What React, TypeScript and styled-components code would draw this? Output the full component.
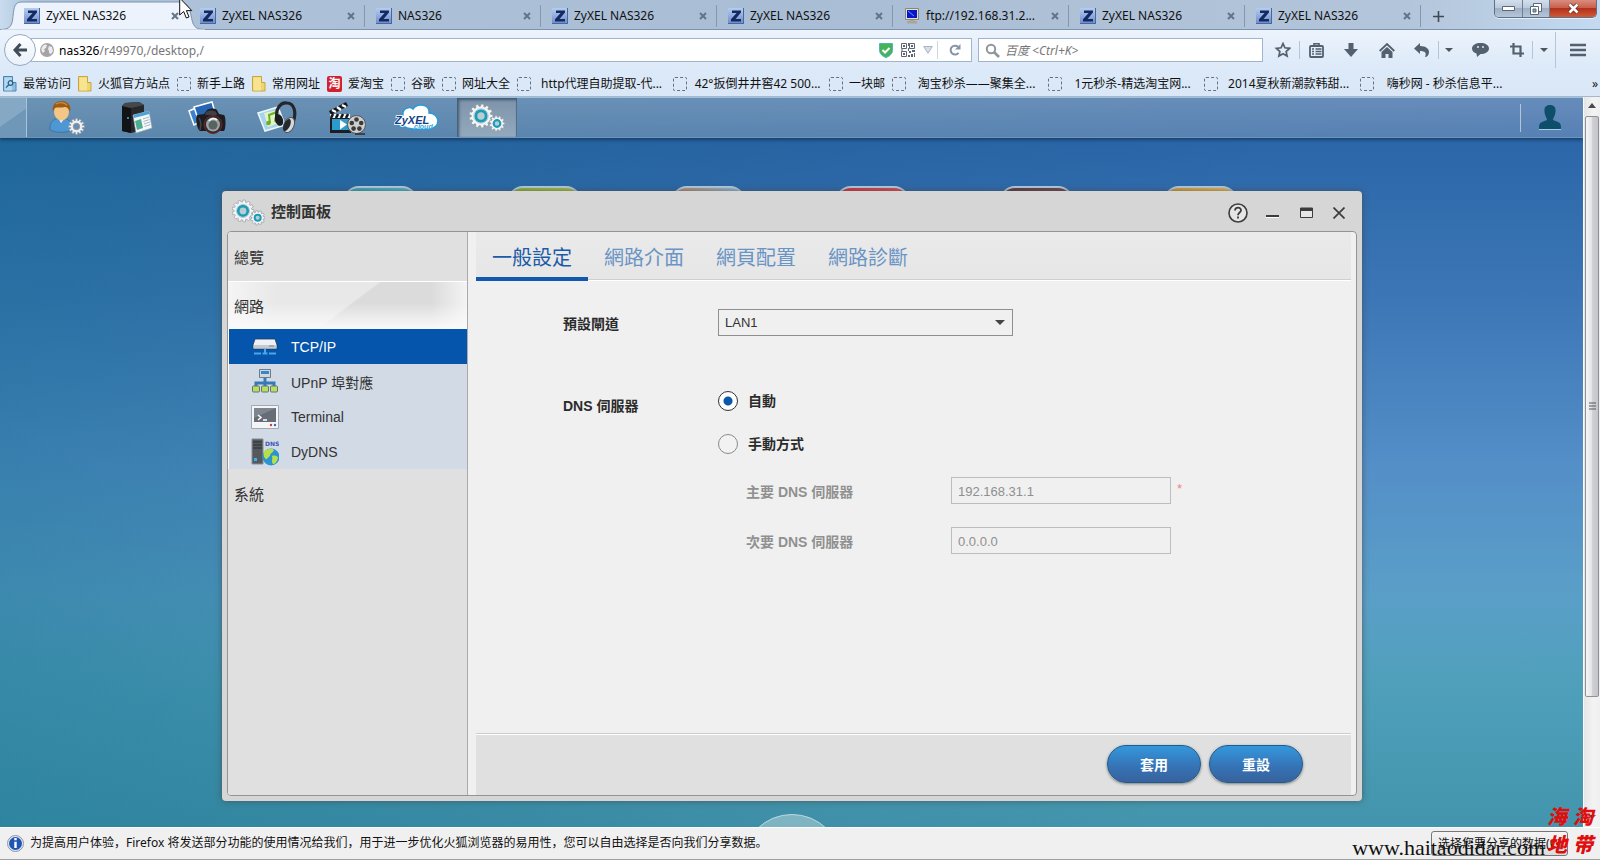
import React from "react";
import styled, { createGlobalStyle, css } from "styled-components";

const uiFont = `"Noto Sans", "Noto Sans CJK SC", sans-serif`;
const nasFont = `"Liberation Sans", "Noto Sans CJK TC", sans-serif`;

const GlobalStyle = createGlobalStyle`
  *, *::before, *::after { box-sizing: border-box; }
  body { margin: 0; font-family: ${uiFont}; font-size: 12px; color: #111; }
  button, input, select { font: inherit; color: inherit; margin: 0; padding: 0; }
  button { background: none; border: 0; cursor: pointer; }
  ul { list-style: none; margin: 0; padding: 0; }
  a { color: inherit; text-decoration: none; }
  h1, h2 { margin: 0; }
  svg { display: block; flex: none; }
`;

/* ---------- browser frame ---------- */

const Page = styled.div`
  position: relative;
  display: flex;
  flex-direction: column;
  min-height: 100vh;
  overflow: hidden;
`;

const TabStrip = styled.header`
  position: relative;
  display: flex;
  height: 30px;
  padding-left: 13px;
  background: linear-gradient(90deg, #c9dcef 0, #aec3da 30px, #a9bdd4 50%, #b3c5da 88%, #c3daf0 100%);
  border-bottom: 1px solid #7c93b0;
`;

const TabList = styled.ul`
  display: flex;
  min-width: 0;
`;

const TabItem = styled.li<{ $active?: boolean }>`
  position: relative;
  display: flex;
  align-items: center;
  gap: 6px;
  width: 176px;
  height: 30px;
  padding: 2px 9px 0 11px;
  ${(p) =>
    !p.$active &&
    css`
      &::after {
        content: "";
        position: absolute;
        right: 0;
        top: 5px;
        height: 22px;
        border-right: 1px solid #8497ae;
      }
    `}
`;

const TabShape = styled.svg`
  position: absolute;
  left: -13px;
  top: 0;
`;

const FaviconSvg = styled.svg`
  position: relative;
`;

const TabTitle = styled.a`
  position: relative;
  flex: 1;
  white-space: nowrap;
  line-height: 16px;
`;

const IconButton = styled.button<{ $w?: number; $h?: number; $line?: boolean }>`
  position: relative;
  display: flex;
  flex: none;
  align-items: center;
  justify-content: center;
  width: ${(p) => p.$w ?? 16}px;
  height: ${(p) => p.$h ?? 24}px;
  ${(p) => p.$line && "border-left: 1px solid #ccd8e4;"}
`;

const WindowButtons = styled.div`
  display: flex;
  align-self: flex-start;
  margin: 0 3px 0 auto;
  height: 18px;
  border: 1px solid #5f7086;
  border-top: 0;
  border-radius: 0 0 5px 5px;
  overflow: hidden;
  box-shadow: 0 1px 0 #e6f0fa;
`;

const FrameButton = styled.button<{ $close?: boolean }>`
  display: flex;
  align-items: center;
  justify-content: center;
  width: ${(p) => (p.$close ? 47 : 27)}px;
  background: ${(p) =>
    p.$close
      ? "linear-gradient(#d98d7f, #c9604d 45%, #b3301a 50%, #cf5a38)"
      : "linear-gradient(#d3dfec, #bccada 45%, #9fb0c5 50%, #b5c6da)"};
  & + & { border-left: 1px solid #6d7f96; }
`;

const Chrome = styled.div`
  background: linear-gradient(#ecf3fc, #dce9f8 60%, #d9e7f6);
  border-bottom: 1px solid #a6b8cc;
`;

const NavBar = styled.nav`
  display: flex;
  align-items: center;
  height: 40px;
  padding-left: 4px;
`;

const BackButton = styled.button`
  position: relative;
  z-index: 1;
  display: flex;
  flex: none;
  align-items: center;
  justify-content: center;
  width: 32px;
  height: 32px;
  margin-right: -5px;
  border: 1px solid #95a9c1;
  border-radius: 50%;
  background: linear-gradient(#fdfeff, #e9f1fa);
`;

const Field = styled.div<{ $search?: boolean }>`
  display: flex;
  align-items: center;
  flex: ${(p) => (p.$search ? "0 1 285px" : "1 1 0")};
  min-width: 0;
  height: 24px;
  margin-left: ${(p) => (p.$search ? 6 : 0)}px;
  padding-left: ${(p) => (p.$search ? 6 : 8)}px;
  border: 1px solid #9fb4cd;
  background: #fff;
`;

const Address = styled.div`
  flex: 1;
  padding: 1px 0 0 5px;
  line-height: 18px;
  color: #777;
  white-space: nowrap;
  b { font-weight: 400; color: #000; }
`;

const SearchInput = styled.input`
  flex: 1;
  min-width: 0;
  margin-left: 5px;
  border: 0;
  outline: 0;
  background: none;
  font-style: italic;
  &::placeholder { color: #777; opacity: 1; }
`;

const Divider = styled.span<{ $h?: number }>`
  flex: none;
  width: 1px;
  height: ${(p) => p.$h ?? 18}px;
  background: #b4c5d8;
`;

const Bookmarks = styled.ul`
  display: flex;
  align-items: center;
  height: 26px;
  padding: 1px 2px 0 3px;
  white-space: nowrap;
  li:last-child { margin-left: auto; }
`;

const Bookmark = styled.a<{ $wide?: boolean }>`
  display: flex;
  align-items: center;
  gap: 6px;
  margin-right: 7px;
  line-height: 16px;
  width: ${(p) => (p.$wide ? "149px" : "auto")};
  span { flex: 1; text-align: center; }
`;

const Dashed = styled.i`
  flex: none;
  width: 14px;
  height: 14px;
  border: 1px dashed #66717d;
  border-radius: 2px;
`;

const TaoBadge = styled.b`
  flex: none;
  width: 15px;
  height: 16px;
  border-radius: 2px;
  background: #d3202f;
  color: #fff;
  font-size: 12px;
  line-height: 15px;
  text-align: center;
`;

/* ---------- NAS desktop ---------- */

const Viewport = styled.div`
  display: flex;
  flex: 1;
`;

const Desktop = styled.main`
  position: relative;
  display: flex;
  flex: 1;
  flex-direction: column;
  min-width: 0;
  overflow: hidden;
  font-family: ${nasFont};
  background:
    linear-gradient(90deg, rgba(20, 140, 165, 0.22), transparent 50%),
    linear-gradient(100deg, rgba(10, 60, 100, 0.24), rgba(60, 110, 180, 0) 75%),
    linear-gradient(#2a66a8 40px, #3c76b6 200px, #548fc8 370px, #5a9fc8 500px, #50a0bc 580px, #4295ac 100%);
`;

const AppBar = styled.nav`
  position: relative;
  display: flex;
  gap: 10px;
  height: 41px;
  border-top: 1px solid #9fc0dc;
  border-bottom: 1px solid #6e94b8;
  background: linear-gradient(rgba(255, 255, 255, 0.24), rgba(255, 255, 255, 0.16)), linear-gradient(90deg, #3d719c, #3668a6);
  box-shadow: 0 2px 3px rgba(8, 30, 60, 0.5);
`;

const ShowDesktop = styled.button`
  width: 27px;
  background: linear-gradient(145deg, #85a9c5 50%, #6f97b7 51%);
  border-right: 1px solid #a9c4d9;
`;

const AppButton = styled.button<{ $active?: boolean }>`
  display: flex;
  align-items: center;
  justify-content: center;
  width: 60px;
  ${(p) =>
    p.$active &&
    css`
      background: linear-gradient(#7d93a9, #93a9be);
      box-shadow: inset 2px 2px 3px #3f5870, inset -1px 0 1px #4f6a85;
    `}
`;

const UserArea = styled.div`
  display: flex;
  align-items: center;
  margin-left: auto;
  padding-right: 19px;
  gap: 15px;
`;

const Shortcuts = styled.div`
  position: absolute;
  left: 343px;
  top: 89px;
  display: flex;
  gap: 89px;
`;

const Shortcut = styled.i<{ $from: string; $to: string }>`
  width: 75px;
  height: 75px;
  border: 2px solid #b4cbdc;
  border-radius: 16px;
  background: linear-gradient(90deg, ${(p) => p.$from}, ${(p) => p.$to});
`;

const DashboardKnob = styled.button`
  position: absolute;
  left: 50%;
  bottom: -87px;
  width: 100px;
  height: 100px;
  margin-left: -50px;
  border: 1px solid #b9dbe4;
  border-radius: 50%;
  background: rgba(190, 218, 222, 0.5);
`;

const Scrollbar = styled.div`
  display: flex;
  flex: none;
  flex-direction: column;
  align-items: center;
  width: 17px;
  padding: 6px 0 8px;
  background: linear-gradient(90deg, #e6e6e6, #f3f3f3 60%, #efefef);
  border-left: 1px solid #fafafa;
`;

const Thumb = styled.div`
  display: flex;
  align-items: center;
  justify-content: center;
  width: 14px;
  flex: 0 1 581px;
  margin: 8px 0 auto;
  border: 1px solid #909094;
  border-radius: 2px;
  background: linear-gradient(90deg, #f6f6f7, #e6e6e9 45%, #cfd0d5 55%, #c4c5ca);
`;

/* ---------- control panel window ---------- */

const Panel = styled.section`
  position: relative;
  display: flex;
  flex: 1;
  flex-direction: column;
  margin: 53px 221px 26px 222px;
  padding: 0 5px 5px;
  border-radius: 4px;
  background: #d6d6d6;
  box-shadow: 0 0 6px rgba(70, 70, 70, 0.7);
  color: #333;
`;

const PanelHeader = styled.header`
  display: flex;
  align-items: center;
  height: 40px;
  padding: 3px 2px 0 5px;
`;

const PanelTitle = styled.h1`
  margin: 0 auto 0 6px;
  padding-bottom: 2px;
  font-size: 15px;
  line-height: 20px;
  font-weight: 700;
`;

const PanelBody = styled.div`
  display: flex;
  flex: 1;
  border: 1px solid #929497;
  border-radius: 4px;
  background: #f0f0f0;
  overflow: hidden;
`;

const Sidebar = styled.aside`
  flex: none;
  width: 240px;
  border-right: 1px solid #aaa;
  background: #e0e0e0;
`;

const Section = styled.button<{ $open?: boolean }>`
  display: block;
  width: 100%;
  height: ${(p) => (p.$open ? 48 : 49)}px;
  padding: 0 0 1px 6px;
  font-size: 15px;
  text-align: left;
  ${(p) =>
    p.$open &&
    css`
      border-top: 1px solid #fff;
      background:
        linear-gradient(transparent 45%, rgba(250, 250, 250, 0.9) 95%),
        linear-gradient(90deg, rgba(246, 246, 246, 0.9), transparent 20%, transparent 85%, rgba(246, 246, 246, 0.9)),
        linear-gradient(143deg, #e8e8e8 50%, #dbdbdb 51%);
    `}
`;

const SubList = styled.ul`
  padding-left: 1px;
  background: #fff;
`;

const SubItem = styled.a<{ $active?: boolean }>`
  display: flex;
  align-items: center;
  gap: 12px;
  height: 35px;
  padding-left: 22px;
  font-size: 14px;
  background: ${(p) => (p.$active ? "#0455ab" : "#d2dae6")};
  color: ${(p) => (p.$active ? "#fff" : "#333")};
`;

const Content = styled.div`
  display: flex;
  flex: 1;
  flex-direction: column;
  min-width: 0;
  padding: 0 5px 0 8px;
`;

const ContentTabs = styled.div`
  display: flex;
  height: 49px;
  background: linear-gradient(#eaeaea, #e6e6e6);
  box-shadow: inset 0 -1px #fff, inset 0 -2px #cfcfcf;
`;

const ContentTab = styled.button<{ $active?: boolean }>`
  width: 112px;
  padding-top: 3px;
  border-bottom: 4px solid ${(p) => (p.$active ? "#1059ae" : "transparent")};
  color: ${(p) => (p.$active ? "#1a5aa8" : "#6a94c4")};
  font-size: 20px;
`;

const Form = styled.form`
  display: flex;
  flex: 1;
  flex-direction: column;
  gap: 55px;
  padding: 28px 0 28px 87px;
  font-size: 14px;
`;

const FormRow = styled.div`
  display: grid;
  grid-template-columns: 155px 1fr;
`;

const Label = styled.label<{ $muted?: boolean }>`
  padding-top: 5px;
  line-height: 20px;
  font-weight: 700;
  color: ${(p) => (p.$muted ? "#909090" : "#2b2b2b")};
`;

const SelectBox = styled.div`
  position: relative;
  width: 295px;
  svg { position: absolute; right: 8px; top: 11px; pointer-events: none; }
`;

const Select = styled.select`
  appearance: none;
  width: 100%;
  height: 27px;
  padding: 0 6px;
  border: 1px solid #8f8f8f;
  border-radius: 0;
  background: #f0f0f0;
  font-size: 13px;
`;

const Stack = styled.div`
  display: flex;
  flex-direction: column;
  gap: 23px;
`;

const RadioLabel = styled.label`
  display: flex;
  align-items: center;
  gap: 10px;
  height: 20px;
  line-height: 20px;
  font-weight: 700;
  color: #2b2b2b;
`;

const Radio = styled.input`
  appearance: none;
  width: 20px;
  height: 20px;
  border: 1px solid #8a8a8a;
  border-radius: 50%;
  background: #f2f2f2;
  &:checked {
    border-color: #333;
    background: radial-gradient(circle, #0a57ac 4px, #fff 5px);
  }
`;

const SubField = styled.div`
  display: grid;
  grid-template-columns: 205px 220px auto;
  padding-left: 28px;
  justify-content: start;
`;

const TextInput = styled.input`
  height: 27px;
  padding: 2px 6px 0;
  border: 1px solid #bdbdbd;
  background: #f0f0f0;
  color: #8f8f8f;
  font-size: 13px;
`;

const Required = styled.span`
  padding: 4px 0 0 6px;
  color: #ef8585;
  font-size: 13px;
`;

const Footer = styled.footer`
  display: flex;
  align-items: center;
  justify-content: flex-end;
  gap: 8px;
  height: 62px;
  padding: 0 48px 2px 0;
  border-top: 1px solid #ccc;
  background: #e0e0e0;
  box-shadow: inset 0 1px #fff;
`;

const PillButton = styled.button`
  width: 94px;
  height: 38px;
  border: 1px solid #1f5b8c;
  border-radius: 19px;
  background: linear-gradient(#3597dc, #3572b4 60%, #38629c);
  box-shadow: 0 1px 3px rgba(0, 0, 0, 0.45);
  color: #fff;
  font-size: 14px;
  font-weight: 700;
`;

/* ---------- notification bar ---------- */

const Notice = styled.footer`
  display: flex;
  align-items: center;
  gap: 6px;
  height: 33px;
  padding: 0 32px 1px 7px;
  border-top: 1px solid #fff;
  border-bottom: 1px solid #a0a0a0;
  background: #f0f0f0;
`;

const NoticeText = styled.p`
  flex: 1;
  margin: 0;
  line-height: 18px;
  white-space: nowrap;
`;

const NoticeButton = styled.button`
  width: 137px;
  height: 25px;
  border: 1px solid #777;
  border-radius: 3px;
  background: linear-gradient(#f4f4f4, #ebebeb 50%, #dcdcdc);
  white-space: nowrap;
`;

const Stamp = styled.div`
  position: absolute;
  right: 7px;
  bottom: 0;
  display: flex;
  align-items: flex-end;
  gap: 2px;
  pointer-events: none;
`;

const StampUrl = styled.span`
  font: 22px/24px "Liberation Serif", serif;
  color: #111;
`;

const StampSeal = styled.span`
  display: grid;
  grid-template-columns: 20px 20px;
  column-gap: 6px;
  padding-bottom: 2px;
  color: #e00d0d;
  font: italic 900 20px/28px "Noto Sans CJK SC", sans-serif;
`;

const Cursor = styled.svg`
  position: absolute;
  left: 179px;
  top: 0;
`;

/* ---------- drawings ---------- */

function gearPath(cx: number, cy: number, r: number, inner: number, teeth: number) {
  const pts: string[] = [];
  const step = (Math.PI * 2) / teeth;
  for (let i = 0; i < teeth; i++) {
    [[-0.34, inner], [-0.24, r], [0.24, r], [0.34, inner]].forEach(([f, rad]) => {
      const a = (i + f) * step;
      pts.push(`${(cx + Math.cos(a) * rad).toFixed(2)} ${(cy + Math.sin(a) * rad).toFixed(2)}`);
    });
  }
  return `M${pts.join("L")}Z`;
}

const Gears = ({ size = 36 }: { size?: number }) => (
  <svg width={size} height={(size * 30) / 36} viewBox="0 0 36 30" aria-hidden>
    <path d={gearPath(12, 13, 12, 9.8, 13)} fill="#f3f5f6" stroke="#8e979f" strokeWidth=".7" />
    <circle cx="12" cy="13" r="5.2" fill="#b9cdd4" stroke="#1e9cb6" strokeWidth="3" />
    <circle cx="12" cy="13" r="7.2" fill="none" stroke="#a3bcc6" strokeWidth=".8" />
    <path d={gearPath(28, 20.500, 7.900, 6.300, 11)} fill="#f3f5f6" stroke="#8e979f" strokeWidth=".7" />
    <circle cx="28" cy="20.500" r="3.300" fill="#b9cdd4" stroke="#1e9cb6" strokeWidth="2.200" />
  </svg>
);

const UserGear = () => (
  <svg width="36" height="34" viewBox="0 0 36 34" aria-hidden>
    <path d="M1 29C0 21 5 17 12 17s12 4 11 12c-5 3-17 3-22 0z" fill="#4f97d3" stroke="#2c6ba5" strokeWidth=".7" />
    <path d="M9 17l3 5 4-5z" fill="#e8f2fa" />
    <ellipse cx="12.5" cy="11" rx="7.5" ry="8.5" fill="#f5c583" />
    <path d="M4 11C2 3 8 0 13 0s10 4 8 11c-1-3-3-5-5-5-4 1-8 0-10 1-1 1-2 3-2 4z" fill="#9a5b17" />
    <path d="M7 3c3-2 8-2 11 1" stroke="#cf8c3a" strokeWidth="1.2" fill="none" />
    <path d={gearPath(27.5, 25.5, 8, 6, 12)} fill="#eef1f4" stroke="#8e98a3" strokeWidth=".6" />
    <circle cx="27.5" cy="25.5" r="3.2" fill="#6b8eae" stroke="#8e98a3" />
  </svg>
);

const Server = () => (
  <svg width="32" height="34" viewBox="0 0 32 34" aria-hidden>
    <path d="M1 5L4 2l14-1 5 3v25l-13 3-9-2z" fill="#26282b" />
    <path d="M1 5l9 2v25l-9-2z" fill="#121315" />
    <path d="M1 5L4 2l14-1 5 3-13 3z" fill="#44484d" />
    <circle cx="7" cy="17" r="1" fill="#3fa7ff" />
    <path d="M12 14l16-4 3 17-16 5z" fill="#f5f8fa" stroke="#9aa6b0" strokeWidth=".6" />
    <path d="M12.4 14l15.700-4 .6 3-15.700 4z" fill="#4ba4d6" />
    <path d="M14 20l6-2 2 9-6 2z" fill="#4cae91" />
    <path d="M22 18l6-2M22.500 20.500l6-2M23 23l6-2M23.500 25.500l6-2" stroke="#aab6c0" />
  </svg>
);

const Camera = () => (
  <svg width="38" height="34" viewBox="0 0 38 34" aria-hidden>
    <path d="M1 10L17 3l6 12L6 24z" fill="#3b82cf" stroke="#fff" strokeWidth="1.500" />
    <path d="M6 6L24 1l4 14-17 6z" fill="#2766b5" stroke="#fff" strokeWidth="1.500" />
    <path d="M9 14l7-1 3-4c3-2 8-2 10 0l2 4 5 1c2 1 2 14 0 16H12c-3-1-5-14-3-16z" fill="#1c1d20" />
    <path d="M18 11c3-2 7-2 10 0l1 3H17z" fill="#3d4045" />
    <path d="M11 17c2 3 2 8 1 12" stroke="#42464b" strokeWidth="1.500" fill="none" />
    <circle cx="25" cy="23.500" r="9" fill="#2b2c2f" stroke="#7b2022" strokeWidth="1" />
    <circle cx="25" cy="23.500" r="7" fill="#9aa0a5" />
    <circle cx="25" cy="24" r="4.500" fill="#56645d" />
    <path d="M21 20c2-3 6-3 8-1" stroke="#f2f5f7" strokeWidth="1.800" fill="none" />
  </svg>
);

const Music = () => (
  <svg width="40" height="34" viewBox="0 0 40 34" aria-hidden>
    <path d="M1 12l20-6 7 18-20 6z" fill="#a8d3ea" stroke="#eef7fb" strokeWidth="1.500" />
    <path d="M7 12l14-3 3 12-13 5z" fill="#e2f2c9" />
    <path d="M13 22l-1-8 8-3 1 8" fill="none" stroke="#6ab023" strokeWidth="2" />
    <circle cx="11.500" cy="22" r="2.300" fill="#6ab023" />
    <circle cx="19.500" cy="19.500" r="2.300" fill="#6ab023" />
    <path d="M20 18C18 7 24 1 30 2c7 0 10 9 6 20" fill="none" stroke="#23262a" strokeWidth="3.200" />
    <ellipse cx="22" cy="19" rx="4" ry="6" fill="#1b1d20" transform="rotate(-20 22 19)" />
    <ellipse cx="32" cy="24" rx="5" ry="8" fill="#d4d8dc" stroke="#4b5056" transform="rotate(25 32 24)" />
    <ellipse cx="30" cy="24" rx="3" ry="6.500" fill="#24272b" transform="rotate(25 30 24)" />
  </svg>
);

const Video = () => (
  <svg width="38" height="34" viewBox="0 0 38 34" aria-hidden>
    <path d="M1 10L18 1l2 4L3 14z" fill="#15171a" />
    <path d="M4 9l4 2M9 6l4 3M14 4l4 2" stroke="#fff" strokeWidth="2.200" />
    <path d="M2 13h20v4H2z" fill="#f5f5f5" />
    <path d="M5 13l-2 4M10 13l-2 4M15 13l-2 4M20 13l-2 4" stroke="#15171a" strokeWidth="2.600" />
    <path d="M2 17h21v15H2z" fill="#1c1f22" />
    <path d="M4 18h17v11H4z" fill="#2c9ccc" />
    <path d="M12 19l7 4.500-7 5z" fill="#fff" />
    <circle cx="28.500" cy="23.500" r="9" fill="#cfcfcb" stroke="#55575a" />
    <g fill="#3a3b3d"><circle cx="28.500" cy="18.500" r="2.300" /><circle cx="33.200" cy="22" r="2.300" /><circle cx="31.400" cy="27.600" r="2.300" /><circle cx="25.600" cy="27.600" r="2.300" /><circle cx="23.800" cy="22" r="2.300" /></g>
    <path d="M27 33h10" stroke="#2c2d2f" strokeWidth="1.500" />
  </svg>
);

const Cloud = () => (
  <svg width="46" height="30" viewBox="0 0 46 30" aria-hidden>
    <path d="M11 24C0 25 0 13 9 12 8 5 16 3 19 6 24-1 36 2 35 10c10 0 13 13 1 16-6 1-20 1-25-2z" fill="#fff" stroke="#2a9ad8" strokeWidth="1.500" />
    <text x="1" y="21" fontFamily="Liberation Sans, sans-serif" fontSize="11" fontStyle="italic" fontWeight="700" fill="#163f86" stroke="#fff" strokeWidth="1.500" paintOrder="stroke">ZyXEL</text>
    <text x="20" y="26" fontFamily="Liberation Sans, sans-serif" fontSize="7" fontStyle="italic" fontWeight="700" fill="#38a9dc">cloud</text>
  </svg>
);

const Favicon = () => (
  <FaviconSvg width="16" height="16" viewBox="0 0 16 16" aria-hidden>
    <defs>
      <linearGradient id="fav" x1="0" y1="0" x2="0" y2="1">
        <stop offset="0" stopColor="#b4cdf0" />
        <stop offset="1" stopColor="#6a8bcb" />
      </linearGradient>
    </defs>
    <path d="M0 0h16v16H0z" fill="url(#fav)" />
    <path d="M0 15.500h16M15.500 0v16" stroke="#4a66a0" />
    <path d="M4 2.500h9v2L7.500 11H13v2.500H3v-2.200L8.600 5H4z" fill="#14295f" />
  </FaviconSvg>
);

const FtpIcon = () => (
  <svg width="16" height="16" viewBox="0 0 16 16" aria-hidden>
    <path d="M1.500.500h13v11h-13z" fill="#e2dfd5" stroke="#8b877b" />
    <path d="M3 2h10v8H3z" fill="#0a14c8" />
    <path d="M4 3l6 5" stroke="#5aa2ff" />
    <path d="M6 12h4v1h3v2.500H3V13h3z" fill="#aaa696" />
  </svg>
);

const CloseX = () => (
  <svg width="8" height="8" viewBox="0 0 8 8" aria-hidden>
    <path d="M1 1l6 6M7 1L1 7" stroke="#62748a" strokeWidth="2" />
  </svg>
);

const Caret = ({ color = "#4a5663", w = 8 }: { color?: string; w?: number }) => (
  <svg width={w} height={w / 2} viewBox="0 0 8 4" aria-hidden>
    <path d="M0 0h8L4 4z" fill={color} />
  </svg>
);

const glyph = "#53606d";

const Folder = ({ search }: { search?: boolean }) => (
  <svg width="14" height="16" viewBox="0 0 14 16" aria-hidden>
    <path d="M.5.500h9v6h3.500v8.500H.5z" fill={search ? "#8fbfe0" : "#f0d56c"} stroke={search ? "#4b86b3" : "#c9a542"} />
    <path d="M1.500 1.500h7.500v13H1.500z" fill={search ? "#b5d8ee" : "#f7e491"} />
    {search && (
      <g fill="none" stroke="#27628f" strokeWidth="1.300">
        <circle cx="7.500" cy="7" r="2.300" />
        <path d="M5.800 8.800L3 11.600" />
      </g>
    )}
  </svg>
);

/* ---------- data ---------- */

const tabs = ["ZyXEL NAS326", "ZyXEL NAS326", "NAS326", "ZyXEL NAS326", "ZyXEL NAS326", "ftp://192.168.31.2...", "ZyXEL NAS326", "ZyXEL NAS326"];

type Mark = { text: string; icon?: "search" | "folder" | "tao"; wide?: boolean };
const bookmarks: Mark[] = [
  { text: "最常访问", icon: "search" },
  { text: "火狐官方站点", icon: "folder" },
  { text: "新手上路" },
  { text: "常用网址", icon: "folder" },
  { text: "爱淘宝", icon: "tao" },
  { text: "谷歌" },
  { text: "网址大全" },
  { text: "http代理自助提取-代...", wide: true },
  { text: "42°扳倒井井窖42 500...", wide: true },
  { text: "一块邮" },
  { text: "淘宝秒杀——聚集全...", wide: true },
  { text: "1元秒杀-精选淘宝网...", wide: true },
  { text: "2014夏秋新潮款韩甜...", wide: true },
  { text: "嗨秒网 - 秒杀信息平...", wide: true },
];

const apps = [
  { name: "User settings", icon: <UserGear /> },
  { name: "Storage", icon: <Server /> },
  { name: "Photos", icon: <Camera /> },
  { name: "Music", icon: <Music /> },
  { name: "Video", icon: <Video /> },
  { name: "ZyXEL cloud", icon: <Cloud /> },
  { name: "Control panel", icon: <Gears />, active: true },
];

const shortcuts = [
  ["#35a6b8", "#5cb8cc"],
  ["#8ab23a", "#a5c24c"],
  ["#b98b6c", "#8fc0e0"],
  ["#cf3348", "#d8515f"],
  ["#5b3a44", "#6d4a52"],
  ["#d29a3c", "#e6bb5e"],
];

const subItems = [
  {
    text: "TCP/IP",
    icon: (
      <svg width="28" height="28" viewBox="0 0 28 28" aria-hidden>
        <path d="M4 6h20l2 6v4H2v-4z" fill="#eef1f4" stroke="#1c3d66" strokeWidth=".8" />
        <path d="M3 12h22v3H3z" fill="#c3cad1" />
        <path d="M18 13h5" stroke="#7d8791" />
        <path d="M14 16v4M3 20.500h7M11.500 20.500h5M18 20.500h7" stroke="#4aa6ea" strokeWidth="2" />
      </svg>
    ),
  },
  {
    text: "UPnP 埠對應",
    icon: (
      <svg width="28" height="28" viewBox="0 0 28 28" aria-hidden>
        <path d="M8.500 1.500h11v8h-11z" fill="#cfd7de" stroke="#6f7b86" />
        <path d="M10 3h8v3h-8z" fill="#3487cf" />
        <path d="M14 10v8M5 19v-4h18v4" fill="none" stroke="#3479b8" strokeWidth="3" />
        <g fill="#b4e05a" stroke="#67727c"><rect x="1.500" y="18" width="7" height="6" rx="1" /><rect x="10.500" y="18" width="7" height="6" rx="1" /><rect x="19.500" y="18" width="7" height="6" rx="1" /></g>
      </svg>
    ),
  },
  {
    text: "Terminal",
    icon: (
      <svg width="28" height="28" viewBox="0 0 28 28" aria-hidden>
        <path d="M.5 2.500h27v23H.5z" fill="#f3f5f8" stroke="#a3a9b2" />
        <path d="M3 5h22v14H3z" fill="#666d77" />
        <path d="M3 5h22L3 15z" fill="#7e858e" />
        <path d="M7 12l3 2.500-3 2.500M12 17h4" fill="none" stroke="#fff" strokeWidth="1.500" />
        <circle cx="20" cy="22" r="1.200" fill="#d23b3b" />
        <circle cx="24" cy="22" r="1.200" fill="#3a62c8" />
      </svg>
    ),
  },
  {
    text: "DyDNS",
    icon: (
      <svg width="28" height="28" viewBox="0 0 28 28" aria-hidden>
        <path d="M1 1h11v25H1z" fill="#55585c" stroke="#888d92" />
        <path d="M2 4h9M2 7h9M2 10h9" stroke="#2e3033" />
        <path d="M3 20h3v3H3z" fill="#36b1f0" />
        <text x="14" y="8" fontFamily="DejaVu Sans, sans-serif" fontSize="6" fontWeight="700" fill="#3559b8">DNS</text>
        <circle cx="20" cy="19" r="8.500" fill="#2b93cf" />
        <path d="M13 14c3-4 8-4 10-2-1 3-4 3-4 6-2 1-3 4-4 3-2-1-3-4-2-7zM21 18c3-1 6 0 6 2-1 4-3 6-5 6-2-2 0-5-1-8z" fill="#b5e04a" />
      </svg>
    ),
  },
];

const contentTabs = ["一般設定", "網路介面", "網頁配置", "網路診斷"];

/* ---------- page ---------- */

export default function App() {
  return (
    <Page>
      <GlobalStyle />
      <TabStrip>
        <TabList>
          {tabs.map((t, i) => (
            <TabItem key={i} $active={i === 0}>
              {i === 0 && (
                <TabShape width="206" height="30" viewBox="0 0 206 30" aria-hidden>
                  <path d="M0 30v-.5c10 0 12-3 13-13C14 6 15 2 22 2h156c9 0 11 4 13 13 2 11 3 14.500 15 14.500v.5z" fill="#ecf3fc" stroke="#7c93b0" />
                  <path d="M1 30h204" stroke="#ecf3fc" />
                </TabShape>
              )}
              {t.startsWith("ftp") ? <FtpIcon /> : <Favicon />}
              <TabTitle href="#">{t}</TabTitle>
              <IconButton $w={10} aria-label="Close tab"><CloseX /></IconButton>
            </TabItem>
          ))}
        </TabList>
        <IconButton $w={35} $h={32} aria-label="New tab">
          <svg width="11" height="11" viewBox="0 0 11 11" aria-hidden><path d="M5.500 0v11M0 5.500h11" stroke="#3f4a56" strokeWidth="1.600" /></svg>
        </IconButton>
        <WindowButtons>
          <FrameButton aria-label="Minimize window">
            <svg width="13" height="5" viewBox="0 0 13 5" aria-hidden><path d="M.5.500h12v4H.5z" fill="#fff" stroke="#5b6878" /></svg>
          </FrameButton>
          <FrameButton aria-label="Restore window">
            <svg width="12" height="12" viewBox="0 0 12 12" aria-hidden><path d="M3.500.500h8v8h-8z" fill="#fff" stroke="#5b6878" /><path d="M.5 3.500h8v8h-8z" fill="#fff" stroke="#5b6878" /><path d="M3 6h3v3H3z" fill="#8fa0b4" stroke="#5b6878" /></svg>
          </FrameButton>
          <FrameButton $close aria-label="Close window">
            <svg width="13" height="11" viewBox="0 0 13 11" aria-hidden><path d="M2.500 1.500l8 8M10.500 1.500l-8 8" stroke="#6d2a20" strokeWidth="4" /><path d="M2.500 1.500l8 8M10.500 1.500l-8 8" stroke="#fff" strokeWidth="2.500" /></svg>
          </FrameButton>
        </WindowButtons>
      </TabStrip>

      <Chrome>
        <NavBar>
          <BackButton aria-label="Back">
            <svg width="14" height="14" viewBox="0 0 14 14" aria-hidden><path d="M7.500 1L2 7l5.500 6M2 7h12" fill="none" stroke="#414c57" strokeWidth="3" /></svg>
          </BackButton>
          <Field>
            <svg width="14" height="14" viewBox="0 0 14 14" aria-hidden>
              <circle cx="7" cy="7" r="7" fill="#a4a4a4" />
              <path d="M2 4c2-3 4-3 5-2L6 5 4 6l1 2-2 2C1 8 1 6 2 4zM9 3l3 1 1 4-2 3-2-1V8L8 6z" fill="#ececec" />
            </svg>
            <Address><b>nas326</b>/r49970,/desktop,/</Address>
            <IconButton $w={22} aria-label="Site safety">
              <svg width="14" height="15" viewBox="0 0 14 15" aria-hidden><path d="M.5.500h13v7c0 3-3 6-6.500 7C3.500 13.500.5 10.500.5 7.500z" fill="#45b35c" stroke="#4fb3c4" /><path d="M3.500 7L6 9.500 10.500 5" fill="none" stroke="#fff" strokeWidth="2" /></svg>
            </IconButton>
            <IconButton $w={22} aria-label="QR code">
              <svg width="14" height="14" viewBox="0 0 14 14" aria-hidden>
                <path d="M.5.500h5v5h-5zM8.500.500h5v5h-5zM.5 8.500h5v5h-5z" fill="none" stroke="#5c6672" />
                <path d="M2 2h2v2H2zM10 2h2v2h-2zM2 10h2v2H2zM7 0h1v3H7zM7 5h1v3H7zM8 8h2v2H8zM11 7h3v2h-3zM10 11h2v3h-2zM7 12h2v2H7zM13 10h1v4h-1zM0 6.500h2v1H0z" fill="#5c6672" />
              </svg>
            </IconButton>
            <IconButton $w={18} aria-label="History">
              <svg width="10" height="8" viewBox="0 0 10 8" aria-hidden><path d="M.7.500h8.600L5 7.300z" fill="#d5dee8" stroke="#a9b6c4" /></svg>
            </IconButton>
            <IconButton $w={34} $h={18} $line aria-label="Reload">
              <svg width="12" height="12" viewBox="0 0 12 12" aria-hidden><path d="M9.500 8.800A4.400 4.400 0 1 1 9 2.800" fill="none" stroke="#8595a6" strokeWidth="2" /><path d="M11.500 0v5.500H6z" fill="#8595a6" /></svg>
            </IconButton>
          </Field>
          <Field $search>
            <svg width="15" height="15" viewBox="0 0 15 15" aria-hidden><circle cx="6" cy="6" r="4.200" fill="none" stroke="#8e959c" strokeWidth="2" /><path d="M9 9l5 5" stroke="#8e959c" strokeWidth="2.600" /></svg>
            <SearchInput placeholder="百度 <Ctrl+K>" aria-label="Search" />
          </Field>
          <IconButton $w={36} aria-label="Bookmark this page">
            <svg width="20" height="16" viewBox="-4 0 20 16" aria-hidden><path d="M8 1.500l1.900 4.300 4.700.5-3.500 3.200 1 4.600L8 11.700l-4.100 2.400 1-4.600L1.400 6.300l4.700-.5z" fill="none" stroke={glyph} strokeWidth="1.700" /></svg>
          </IconButton>
          <Divider />
          <IconButton $w={33} aria-label="Bookmarks">
            <svg width="15" height="15" viewBox="0 0 15 15" aria-hidden><path d="M5 2.500V.8h5v1.700" fill="none" stroke={glyph} strokeWidth="1.600" /><rect x="1" y="3" width="13" height="11" rx="1" fill="none" stroke={glyph} strokeWidth="1.800" /><path d="M3 6h2M6.500 6h6M3 8.500h2M6.500 8.500h6M3 11h2M6.500 11h6" stroke={glyph} strokeWidth="1.300" /></svg>
          </IconButton>
          <IconButton $w={36} aria-label="Downloads">
            <svg width="14" height="14" viewBox="0 0 14 14" aria-hidden><path d="M4.500 0h5v6H14l-7 8-7-8h4.500z" fill={glyph} /></svg>
          </IconButton>
          <IconButton $w={35} aria-label="Home">
            <svg width="16" height="15" viewBox="0 0 16 15" aria-hidden><path d="M.7 8L8 1l7.300 7" fill="none" stroke={glyph} strokeWidth="1.800" /><path d="M8 4l5.500 5v6H9.500v-4h-3v4h-4V9z" fill={glyph} /></svg>
          </IconButton>
          <IconButton $w={34} aria-label="Undo">
            <svg width="15" height="14" viewBox="0 0 15 14" aria-hidden><path d="M6 0v3c6 0 9 3 9 6 0 3-2 5-4 5 2-4 0-6-5-6v3L0 5.500z" fill={glyph} /></svg>
          </IconButton>
          <Divider />
          <IconButton $w={20} aria-label="Undo list"><Caret /></IconButton>
          <IconButton $w={43} aria-label="Chat">
            <svg width="17" height="14" viewBox="0 0 17 14" aria-hidden><path d="M8.500 0C13 0 17 2 17 5.500S13 11 8.500 11L5 14l-.5-3.500C2 10 0 8 0 5.500 0 2 4 0 8.500 0z" fill={glyph} /><circle cx="6" cy="4" r="1" fill="#dce9f8" /><circle cx="11" cy="4" r="1" fill="#dce9f8" /></svg>
          </IconButton>
          <IconButton $w={30} aria-label="Screenshot">
            <svg width="14" height="14" viewBox="0 0 14 14" aria-hidden><path d="M3.500 0v10.500H14M0 3.500h10.500V14" fill="none" stroke={glyph} strokeWidth="2.200" /></svg>
          </IconButton>
          <Divider />
          <IconButton $w={22} aria-label="Screenshot options"><Caret /></IconButton>
          <Divider $h={36} />
          <IconButton $w={44} aria-label="Menu">
            <svg width="16" height="14" viewBox="0 0 16 14" aria-hidden><path d="M0 2h16M0 7h16M0 12h16" stroke={glyph} strokeWidth="2.600" /></svg>
          </IconButton>
        </NavBar>
        <Bookmarks>
          {bookmarks.map((b) => (
            <li key={b.text}>
              <Bookmark href="#" $wide={b.wide}>
                {b.icon === "tao" ? <TaoBadge>淘</TaoBadge> : b.icon ? <Folder search={b.icon === "search"} /> : <Dashed />}
                <span>{b.text}</span>
              </Bookmark>
            </li>
          ))}
          <li><button aria-label="More bookmarks">»</button></li>
        </Bookmarks>
      </Chrome>

      <Viewport>
        <Desktop>
          <AppBar>
            <ShowDesktop aria-label="Show desktop" />
            {apps.map((a) => (
              <AppButton key={a.name} $active={a.active} aria-label={a.name}>{a.icon}</AppButton>
            ))}
            <UserArea>
              <Divider $h={28} />
              <IconButton $w={28} aria-label="Account">
                <svg width="22" height="25" viewBox="0 0 22 25" aria-hidden><path d="M11 0c4 0 6 2 5.500 7-.5 4-2 5-2.500 8l5 2c2 1 3 2 3 6v1H0v-1c0-4 1-5 3-6l5-2c-.5-3-2-4-2.500-8C5 2 7 0 11 0z" fill="#0d4f6b" /><path d="M0 24.500h22" stroke="#a9cde0" /></svg>
              </IconButton>
            </UserArea>
          </AppBar>
          <Shortcuts>
            {shortcuts.map(([from, to]) => <Shortcut key={from} $from={from} $to={to} />)}
          </Shortcuts>
          <DashboardKnob aria-label="Dashboard" />
          <Panel>
            <PanelHeader>
              <Gears size={33} />
              <PanelTitle>控制面板</PanelTitle>
              <IconButton $w={34} aria-label="Help">
                <svg width="20" height="20" viewBox="0 0 20 20" aria-hidden><circle cx="10" cy="10" r="9" fill="#e6e6e6" stroke="#3c3c3c" strokeWidth="1.600" /><path d="M7 7.500c0-4 6.300-3.600 6 0-.2 2-3 2-3 4.700M10 13.600v2" fill="none" stroke="#3c3c3c" strokeWidth="1.800" /></svg>
              </IconButton>
              <IconButton $w={34} aria-label="Minimize">
                <svg width="13" height="16" viewBox="0 0 13 16" aria-hidden><path d="M0 11h13" stroke="#3c3c3c" strokeWidth="2" /><path d="M0 12.500h13" stroke="#fff" /></svg>
              </IconButton>
              <IconButton $w={34} aria-label="Maximize">
                <svg width="13" height="12" viewBox="0 0 13 12" aria-hidden><path d="M.5 1h12v9.500H.5z" fill="#e6e6e6" stroke="#3c3c3c" /><path d="M0 2.500h13" stroke="#3c3c3c" strokeWidth="3" /></svg>
              </IconButton>
              <IconButton $w={32} aria-label="Close">
                <svg width="12" height="12" viewBox="0 0 12 12" aria-hidden><path d="M.5.500l11 11M11.500.500l-11 11" stroke="#3c3c3c" strokeWidth="1.700" /></svg>
              </IconButton>
            </PanelHeader>
            <PanelBody>
              <Sidebar>
                <Section>總覽</Section>
                <Section $open>網路</Section>
                <SubList>
                  {subItems.map((s, i) => (
                    <li key={s.text}><SubItem href="#" $active={i === 0}>{s.icon}{s.text}</SubItem></li>
                  ))}
                </SubList>
                <Section>系統</Section>
              </Sidebar>
              <Content>
                <ContentTabs>
                  {contentTabs.map((t, i) => <ContentTab key={t} $active={i === 0}>{t}</ContentTab>)}
                </ContentTabs>
                <Form>
                  <FormRow>
                    <Label htmlFor="gateway">預設閘道</Label>
                    <SelectBox>
                      <Select id="gateway" defaultValue="LAN1"><option>LAN1</option></Select>
                      <Caret w={10} color="#444" />
                    </SelectBox>
                  </FormRow>
                  <FormRow role="radiogroup" aria-labelledby="dns-label">
                    <Label as="span" id="dns-label">DNS 伺服器</Label>
                    <Stack>
                      <RadioLabel><Radio type="radio" name="dns" defaultChecked />自動</RadioLabel>
                      <RadioLabel><Radio type="radio" name="dns" />手動方式</RadioLabel>
                      <SubField>
                        <Label $muted htmlFor="dns1">主要 DNS 伺服器</Label>
                        <TextInput id="dns1" defaultValue="192.168.31.1" disabled />
                        <Required>*</Required>
                      </SubField>
                      <SubField>
                        <Label $muted htmlFor="dns2">次要 DNS 伺服器</Label>
                        <TextInput id="dns2" defaultValue="0.0.0.0" disabled />
                      </SubField>
                    </Stack>
                  </FormRow>
                </Form>
                <Footer>
                  <PillButton>套用</PillButton>
                  <PillButton>重設</PillButton>
                </Footer>
              </Content>
            </PanelBody>
          </Panel>
        </Desktop>
        <Scrollbar>
          <svg width="8" height="5" viewBox="0 0 8 5" aria-hidden><path d="M0 5h8L4 0z" fill="#4a4a4a" /></svg>
          <Thumb>
            <svg width="7" height="9" viewBox="0 0 7 9" aria-hidden><path d="M0 1h7M0 4h7M0 7h7" stroke="#55565a" strokeWidth="1.200" /></svg>
          </Thumb>
          <Caret color="#4a4a4a" />
        </Scrollbar>
      </Viewport>

      <Notice>
        <svg width="17" height="17" viewBox="0 0 17 17" aria-hidden><circle cx="8.500" cy="8.500" r="8" fill="#e4e8ef" stroke="#8d96a5" /><circle cx="8.500" cy="8.500" r="6.500" fill="#1f55b5" /><path d="M8.500 3v2.200M8.500 6.800v6.200" stroke="#fff" strokeWidth="2.400" /></svg>
        <NoticeText>为提高用户体验，Firefox 将发送部分功能的使用情况给我们，用于进一步优化火狐浏览器的易用性，您可以自由选择是否向我们分享数据。</NoticeText>
        <NoticeButton>选择您要分享的数据(C)</NoticeButton>
      </Notice>

      <Stamp>
        <StampUrl>www.haitaodidar.com</StampUrl>
        <StampSeal><span>海</span><span>淘</span><span>地</span><span>带</span></StampSeal>
      </Stamp>
      <Cursor width="14" height="21" viewBox="0 0 14 21" aria-hidden>
        <path d="M.7-2v17l4-3.500 2.600 6.500 2.700-1-2.600-6.400h5.400z" fill="#fff" stroke="#111" />
      </Cursor>
    </Page>
  );
}
